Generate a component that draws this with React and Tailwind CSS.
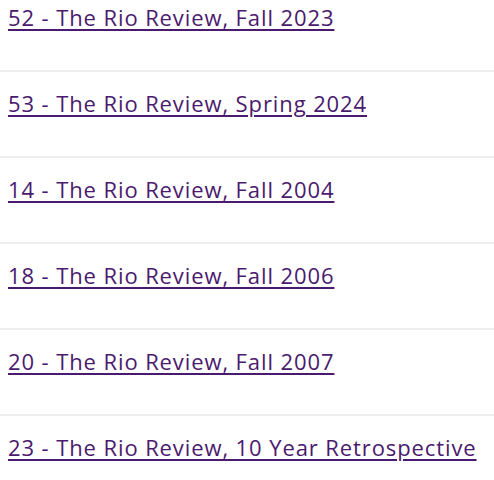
import React from 'react';

const issues = [
  '52 - The Rio Review, Fall 2023',
  '53 - The Rio Review, Spring 2024',
  '14 - The Rio Review, Fall 2004',
  '18 - The Rio Review, Fall 2006',
  '20 - The Rio Review, Fall 2007',
  '23 - The Rio Review, 10 Year Retrospective',
];

export default function App() {
  return (
    <div className="w-[494px] h-[480px] overflow-hidden bg-white" style={{ fontFamily: '"Open Sans", "DejaVu Sans", sans-serif' }}>
      <ul className="-mt-[14px]">
        {issues.map((title, i) => (
          <li
            key={title}
            className={`pt-[16px] pb-[38px] pl-2 ${i < issues.length - 1 ? 'border-b-2 border-[#eeeeee]' : ''}`}
          >
            <a
              href="#"
              className="text-[22px] leading-[30px] font-medium tracking-[0.9px] text-[#4a1a6e] underline underline-offset-[3px] decoration-[1.5px]"
            >
              {title}
            </a>
          </li>
        ))}
      </ul>
    </div>
  );
}
